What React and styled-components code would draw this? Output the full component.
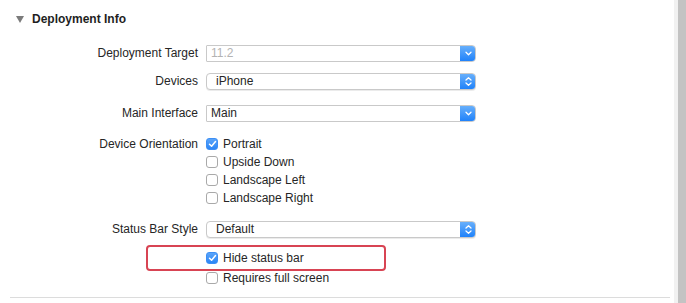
import React from 'react'
import styled, { createGlobalStyle } from 'styled-components'

const GlobalStyle = createGlobalStyle`
    html, body {
        margin: 0;
        padding: 0;
        background: #ffffff;
    }
    body {
        font-family: 'Liberation Sans', Arial, sans-serif;
        font-size: 12px;
        color: #262626;
    }
`

const Window = styled.div`
    display: flex;
    width: 686px;
    height: 303px;
    overflow: hidden;
`

const Content = styled.div`
    flex: 1;
    padding: 0 4px 0 10px;
`

const Gutter = styled.div`
    width: 4px;
    background: #f1f1f1;
`

const Scroller = styled.div`
    width: 8px;
    background: #c3c3c3;
`

const Header = styled.div`
    display: flex;
    align-items: center;
    gap: 8px;
    height: 20px;
    margin-top: 9px;
    padding-left: 6px;
    font-weight: bold;
    font-size: 12px;
    color: #1f1f1f;
`

const Triangle = styled.span`
    width: 0;
    height: 0;
    border-left: 4px solid transparent;
    border-right: 4px solid transparent;
    border-top: 7px solid #7b7b7b;
`

const Row = styled.div`
    display: grid;
    grid-template-columns: 188px 270px;
    column-gap: 8px;
    align-items: center;
    height: ${p => p.h || 18}px;
    margin-top: ${p => p.mt || 0}px;
    position: relative;
`

const Label = styled.div`
    text-align: right;
    white-space: nowrap;
    align-self: ${p => (p.top ? 'start' : 'center')};
    line-height: 18px;
`

const Select = styled.div`
    display: flex;
    height: 17px;
    box-sizing: border-box;
    border: 1px solid #c9c9c9;
    border-radius: ${p => (p.rounded ? '4px' : '1px 4px 4px 1px')};
    background: #fff;
    box-shadow: ${p => (p.rounded ? '0 1px 0 rgba(0,0,0,0.08)' : 'none')};
    overflow: hidden;
`

const Value = styled.div`
    flex: 1;
    padding-left: ${p => (p.rounded ? 9 : 4)}px;
    line-height: 15px;
    color: ${p => (p.disabled ? '#b3b3b3' : '#262626')};
`

const Arrow = styled.div`
    width: 16px;
    margin: -1px -1px -1px 0;
    background: linear-gradient(#6cb2fb, #1b7ffa);
    border-radius: 0 4px 4px 0;
    display: flex;
    align-items: center;
    justify-content: center;
`

const Group = styled.div`
    display: flex;
    flex-direction: column;
`

const Check = styled.label`
    display: flex;
    align-items: center;
    gap: 5px;
    height: 18px;
    white-space: nowrap;
`

const Box = styled.span`
    width: 12px;
    height: 12px;
    box-sizing: border-box;
    border-radius: 3px;
    border: 1px solid ${p => (p.on ? '#3d8ff5' : '#a9a9a9')};
    background: ${p => (p.on ? 'linear-gradient(#5aa4f9, #2c86f6)' : '#fff')};
    display: flex;
    align-items: center;
    justify-content: center;
`

const Highlight = styled.div`
    position: absolute;
    left: 136px;
    top: -4px;
    width: 240px;
    height: 26px;
    box-sizing: border-box;
    border: 2px solid #d84453;
    border-radius: 4px;
    pointer-events: none;
`

const Divider = styled.div`
    height: 1px;
    background: #dcdcdc;
    margin-top: 10px;
`

const Chevron = ({ double }) => (
    <svg width="9" height="11" viewBox="0 0 9 11">
        {double ? (
            <g fill="none" stroke="#fff" strokeWidth="1.3" strokeLinecap="round" strokeLinejoin="round">
                <path d="M2 4 L4.5 1.8 L7 4" />
                <path d="M2 7 L4.5 9.2 L7 7" />
            </g>
        ) : (
            <path d="M2 4.3 L4.5 6.8 L7 4.3" fill="none" stroke="#fff" strokeWidth="1.3" strokeLinecap="round" strokeLinejoin="round" />
        )}
    </svg>
)

const Tick = () => (
    <svg width="9" height="8" viewBox="0 0 9 8">
        <path d="M1.5 4.2 L3.6 6.2 L7.5 1.5" fill="none" stroke="#fff" strokeWidth="1.5" strokeLinecap="round" strokeLinejoin="round" />
    </svg>
)

const PopUp = ({ value, rounded, disabled }) => (
    <Select rounded={rounded}>
        <Value rounded={rounded} disabled={disabled}>{value}</Value>
        <Arrow>
            <Chevron double={rounded} />
        </Arrow>
    </Select>
)

const CheckItem = ({ on, children }) => (
    <Check>
        <Box on={on}>{on && <Tick />}</Box>
        {children}
    </Check>
)

export default function App() {
    return (
        <Window>
            <GlobalStyle />
            <Content>
                <Header>
                    <Triangle />
                    Deployment Info
                </Header>

                <Row h={17} mt={15}>
                    <Label>Deployment Target</Label>
                    <PopUp value="11.2" disabled />
                </Row>
                <Row h={17} mt={11}>
                    <Label>Devices</Label>
                    <PopUp value="iPhone" rounded />
                </Row>
                <Row h={17} mt={15}>
                    <Label>Main Interface</Label>
                    <PopUp value="Main" />
                </Row>

                <Row h={72} mt={14}>
                    <Label top>Device Orientation</Label>
                    <Group>
                        <CheckItem on>Portrait</CheckItem>
                        <CheckItem>Upside Down</CheckItem>
                        <CheckItem>Landscape Left</CheckItem>
                        <CheckItem>Landscape Right</CheckItem>
                    </Group>
                </Row>

                <Row h={17} mt={13}>
                    <Label>Status Bar Style</Label>
                    <PopUp value="Default" rounded />
                </Row>
                <Row mt={12}>
                    <Label />
                    <CheckItem on>Hide status bar</CheckItem>
                    <Highlight />
                </Row>
                <Row mt={2}>
                    <Label />
                    <CheckItem>Requires full screen</CheckItem>
                </Row>
                <Divider />
            </Content>
            <Gutter />
            <Scroller />
        </Window>
    )
}
